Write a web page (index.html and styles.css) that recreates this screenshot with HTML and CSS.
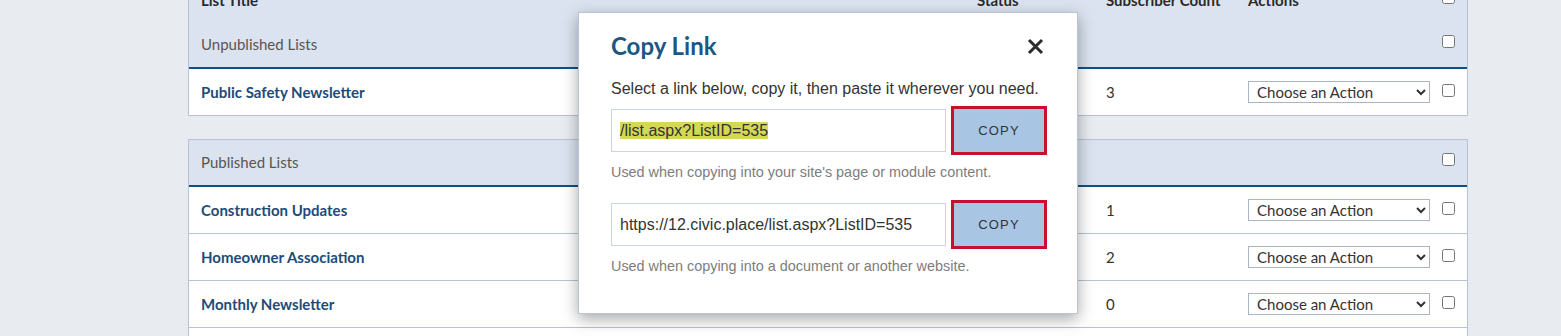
FILE: index.html
```html
<!DOCTYPE html>
<html lang="en">
<head>
    <meta charset="UTF-8">
    <meta name="viewport" content="width=device-width, initial-scale=1.0">
    <title>Lists - Copy Link</title>
    <link rel="stylesheet" href="styles.css">
</head>
<body>
    <div class="page">
        <table class="lists">
            <colgroup>
                <col class="c-title"><col class="c-status"><col class="c-count"><col class="c-actions"><col class="c-check">
            </colgroup>
            <thead>
                <tr class="cols">
                    <th>List Title</th>
                    <th>Status</th>
                    <th>Subscriber Count</th>
                    <th>Actions</th>
                    <th class="check"><input type="checkbox"></th>
                </tr>
            </thead>
            <tbody>
                <tr class="group">
                    <td colspan="4">Unpublished Lists</td>
                    <td class="check"><input type="checkbox"></td>
                </tr>
                <tr class="item last">
                    <td><a href="#">Public Safety Newsletter</a></td>
                    <td></td>
                    <td>3</td>
                    <td>
                        <select>
                            <option>Choose an Action</option>
                            <option>Edit</option>
                            <option>Copy Link</option>
                        </select>
                    </td>
                    <td class="check"><input type="checkbox"></td>
                </tr>
            </tbody>
        </table>

        <table class="lists">
            <colgroup>
                <col class="c-title"><col class="c-status"><col class="c-count"><col class="c-actions"><col class="c-check">
            </colgroup>
            <tbody>
                <tr class="group">
                    <td colspan="4">Published Lists</td>
                    <td class="check"><input type="checkbox"></td>
                </tr>
                <tr class="item">
                    <td><a href="#">Construction Updates</a></td>
                    <td></td>
                    <td>1</td>
                    <td>
                        <select>
                            <option>Choose an Action</option>
                            <option>Edit</option>
                            <option>Copy Link</option>
                        </select>
                    </td>
                    <td class="check"><input type="checkbox"></td>
                </tr>
                <tr class="item">
                    <td><a href="#">Homeowner Association</a></td>
                    <td></td>
                    <td>2</td>
                    <td>
                        <select>
                            <option>Choose an Action</option>
                            <option>Edit</option>
                            <option>Copy Link</option>
                        </select>
                    </td>
                    <td class="check"><input type="checkbox"></td>
                </tr>
                <tr class="item">
                    <td><a href="#">Monthly Newsletter</a></td>
                    <td></td>
                    <td>0</td>
                    <td>
                        <select>
                            <option>Choose an Action</option>
                            <option>Edit</option>
                            <option>Copy Link</option>
                        </select>
                    </td>
                    <td class="check"><input type="checkbox"></td>
                </tr>
                <tr class="item">
                    <td><a href="#">Parks and Recreation</a></td>
                    <td></td>
                    <td>4</td>
                    <td>
                        <select>
                            <option>Choose an Action</option>
                        </select>
                    </td>
                    <td class="check"><input type="checkbox"></td>
                </tr>
            </tbody>
        </table>
    </div>

    <div class="modal">
        <div class="modal-head">
            <h2>Copy Link</h2>
            <button class="close" aria-label="Close">
                <svg width="17" height="17" viewBox="0 0 17 17">
                    <path d="M2 2 L15 15 M15 2 L2 15" stroke="#2b2b2b" stroke-width="3" fill="none"/>
                </svg>
            </button>
        </div>
        <p class="lead">Select a link below, copy it, then paste it wherever you need.</p>

        <div class="link-row">
            <div class="link-field"><span class="sel">/list.aspx?ListID=535</span></div>
            <button class="copy">COPY</button>
        </div>
        <p class="hint">Used when copying into your site's page or module content.</p>

        <div class="link-row second">
            <div class="link-field">https://12.civic.place/list.aspx?ListID=535</div>
            <button class="copy">COPY</button>
        </div>
        <p class="hint">Used when copying into a document or another website.</p>
    </div>
</body>
</html>
```

FILE: styles.css
```css
body {
    margin: 0;
    background-color: #e8ecf1;
    font-family: Lato, "Noto Sans", sans-serif;
    font-size: 15px;
    color: #333;
    overflow: hidden;
}
.page {
    margin: -24px 0 0 188px;
}
.lists {
    width: 1280px;
    table-layout: fixed;
    border-collapse: separate;
    border-spacing: 0;
    border: 1px solid #b6c3d2;
    background-color: #fff;
    margin-bottom: 23px;
}
.c-title { width: 776px; }
.c-status { width: 129px; }
.c-count { width: 142px; }
.c-actions { width: 201px; }
.c-check { width: 30px; }

.lists th,
.lists td {
    padding: 0 0 0 12px;
    text-align: left;
    vertical-align: middle;
}
.lists .check {
    padding-left: 5px;
}
.cols th {
    height: 45px;
    background-color: #dae3ef;
    font-weight: 700;
    color: #2a2a2a;
}
.group td {
    height: 43px;
    padding-bottom: 2px;
    background-color: #dae3ef;
    border-bottom: 2px solid #0b5289;
    color: #5a5550;
}
.item td {
    height: 46px;
    border-bottom: 1px solid #b6c3d2;
}
.item.last td {
    border-bottom: none;
}
.item a {
    color: #1e4b78;
    font-weight: 700;
    text-decoration: none;
}
input[type="checkbox"] {
    display: block;
    margin: 0 0 4px 0;
    width: 13px;
    height: 13px;
}
select {
    display: block;
    width: 182px;
    height: 22px;
    border: 1px solid #a9b5c4;
    border-radius: 0;
    background-color: #fff;
    font-family: Lato, "Noto Sans", sans-serif;
    font-size: 15px;
    color: #333;
    padding: 0 0 0 4px;
}

.modal {
    position: absolute;
    left: 578px;
    top: 12px;
    width: 500px;
    height: 302px;
    box-sizing: border-box;
    background-color: #fff;
    border: 1px solid #b8c4d1;
    box-shadow: 0 5px 15px rgba(0, 0, 0, 0.35);
    padding: 20px 30px 0 32px;
    font-family: "Liberation Sans", Arial, sans-serif;
}
.modal-head {
    display: flex;
    justify-content: space-between;
    align-items: center;
}
.modal-head h2 {
    margin: 0;
    font-family: Lato, "Noto Sans", sans-serif;
    font-size: 24px;
    line-height: 26px;
    font-weight: 700;
    color: #1c5784;
}
.close {
    border: none;
    background: none;
    padding: 0;
    margin-right: 3px;
    width: 17px;
    height: 17px;
    cursor: pointer;
}
.close svg {
    display: block;
}
.lead {
    margin: 20px 0 0 0;
    font-size: 16px;
    line-height: 20px;
    color: #333;
}
.link-row {
    display: flex;
    align-items: center;
    gap: 5px;
    margin-top: 7px;
}
.link-row.second {
    margin-top: 18px;
}
.link-field {
    width: 335px;
    height: 43px;
    box-sizing: border-box;
    border: 1px solid #ccd4de;
    padding: 0 8px;
    font-size: 16px;
    line-height: 41px;
    color: #333;
    white-space: nowrap;
    overflow: hidden;
}
.sel {
    background-color: #d4d854;
}
.copy {
    width: 96px;
    height: 49px;
    box-sizing: border-box;
    border: 3px solid #c8102e;
    background-color: #a8c6e4;
    font-family: "Liberation Sans", Arial, sans-serif;
    font-size: 13px;
    letter-spacing: 1.2px;
    color: #333;
    cursor: pointer;
}
.hint {
    margin: 7px 0 0 0;
    font-size: 14.4px;
    line-height: 20px;
    color: #7d7d7d;
}
```
